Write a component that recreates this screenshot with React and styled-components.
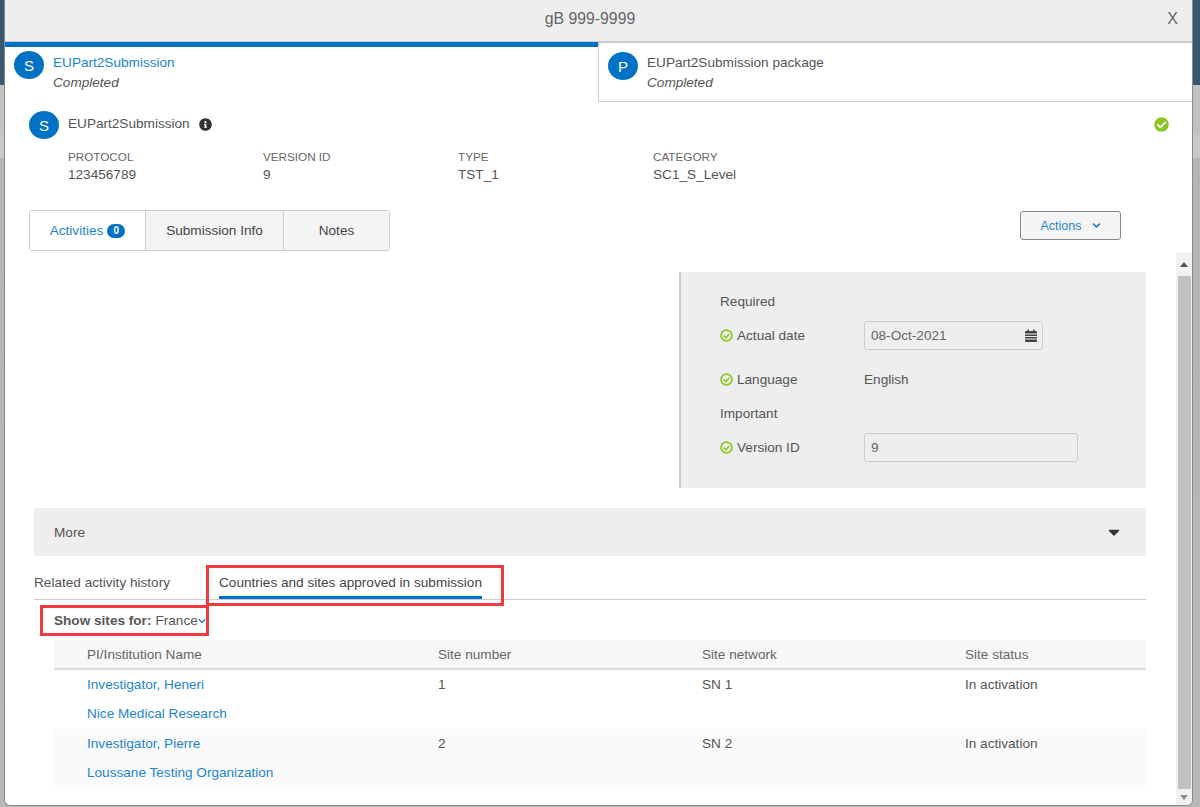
import React from 'react'
import styled, { createGlobalStyle } from 'styled-components'
import { FaInfoCircle, FaCheckCircle, FaChevronDown, FaCaretDown } from 'react-icons/fa'

const blue = '#0072c6'
const link = '#1c85d0'
const text = '#555'

const GlobalStyle = createGlobalStyle`
  html, body { margin: 0; padding: 0; }
  body { font-family: "Liberation Sans", Arial, sans-serif; font-size: 13.6px; color: ${text}; }
`

const Backdrop = styled.div`
  height: 807px;
  box-sizing: border-box;
  padding: 0 7px 1px 4px;
  overflow: hidden;
  background: linear-gradient(to bottom, #3c566f 0, #3c566f 85px, #c2c2c2 85px, #c2c2c2 135px, #c6c9cc 135px, #c6c9cc 158px, #b4b4b4 158px, #b8b8b8 100%);
`

const Modal = styled.div`
  height: 100%;
  box-sizing: border-box;
  display: flex;
  flex-direction: column;
  background: #fff;
  border: 1px solid #8a8a8a;
  border-top: 0;
  border-radius: 0 0 6px 6px;
  overflow: hidden;
`

const Header = styled.header`
  height: 38px;
  flex: none;
  display: flex;
  align-items: center;
  justify-content: center;
  position: relative;
  background: #eee;
  border-bottom: 1px solid #ccc;
  font-size: 15.8px;
  color: #666;
  padding: 0 17px 3px 0;
`

const Close = styled.span`
  position: absolute;
  right: 14px;
  top: 10px;
  font-size: 16px;
`

const Steps = styled.div`
  display: flex;
  flex: none;
  height: 60px;
`

const Step = styled.div`
  box-sizing: border-box;
  display: flex;
  gap: 9px;
  width: ${p => (p.$active ? '593px' : 'auto')};
  flex: ${p => (p.$active ? 'none' : 1)};
  padding: ${p => (p.$active ? '4px 0 0 9px' : '9px 0 0 9px')};
  border-top: ${p => (p.$active ? `5px solid ${blue}` : '1px solid #ccc')};
  border-left: ${p => (p.$active ? 0 : '1px solid #ccc')};
  border-bottom: ${p => (p.$active ? 0 : '1px solid #ccc')};
`

const Avatar = styled.span`
  width: 30px;
  height: 28px;
  flex: none;
  border-radius: 50%;
  background: ${blue};
  color: #fff;
  display: flex;
  align-items: center;
  justify-content: center;
  font-size: 15px;
`

const StepText = styled.div`
  line-height: 20px;
  padding-top: ${p => (p.$active ? '2px' : '1px')};
`

const StepName = styled.div`
  color: ${p => (p.$active ? link : text)};
`

const Status = styled.div`
  font-style: italic;
`

const Summary = styled.section`
  flex: none;
  padding: 9px 23px 0 24px;
`

const TitleRow = styled.div`
  display: flex;
  align-items: center;
  gap: 9px;
  height: 28px;
`

const TitleText = styled.span`
  margin-bottom: 4px;
`

const InfoIcon = styled(FaInfoCircle)`
  color: #333;
  font-size: 13px;
  margin: 0 0 1px 0;
`

const DoneIcon = styled(FaCheckCircle)`
  color: #8cc524;
  font-size: 15px;
  margin: 0 0 1px auto;
`

const Facts = styled.div`
  display: grid;
  grid-template-columns: repeat(4, 195px);
  padding: 9px 0 0 39px;
`

const Fact = styled.div`
  line-height: 17px;
`

const FactLabel = styled.div`
  font-size: 11.7px;
  margin-bottom: 1px;
  color: #666;
  text-transform: uppercase;
`

const Toolbar = styled.div`
  flex: none;
  display: flex;
  justify-content: space-between;
  align-items: flex-start;
  padding: 27px 71px 0 24px;
  height: 42px;
`

const TabGroup = styled.div`
  display: flex;
  height: 41px;
  box-sizing: border-box;
  border: 1px solid #ccc;
  border-radius: 3px;
  overflow: hidden;
`

const TabButton = styled.div`
  width: ${p => p.$width}px;
  box-sizing: border-box;
  display: flex;
  align-items: center;
  justify-content: center;
  gap: 4px;
  background: ${p => (p.$active ? '#fff' : '#f4f4f4')};
  color: ${p => (p.$active ? link : '#444')};
  & + & { border-left: 1px solid #ccc; }
`

const Badge = styled.span`
  background: ${blue};
  color: #fff;
  font-size: 10px;
  font-weight: bold;
  width: 18px;
  height: 14px;
  border-radius: 8px;
  display: inline-flex;
  align-items: center;
  justify-content: center;
`

const ActionsButton = styled.div`
  width: 101px;
  height: 29px;
  margin-top: 1px;
  box-sizing: border-box;
  border: 1px solid #888;
  border-radius: 3px;
  background: #f5f5f5;
  color: ${link};
  font-size: 12.5px;
  display: flex;
  align-items: center;
  justify-content: center;
  gap: 10px;
  svg { color: ${blue}; font-size: 9px; }
`

const ScrollArea = styled.div`
  flex: 1;
  display: flex;
  min-height: 0;
`

const Content = styled.main`
  flex: 1;
  padding: 20px 30px 0 29px;
`

const Scrollbar = styled.div`
  width: 16px;
  flex: none;
  display: flex;
  flex-direction: column;
  background: #f1f1f1;
`

const ScrollButton = styled.div`
  flex: none;
  height: ${p => p.$height}px;
  display: flex;
  align-items: center;
  justify-content: center;
  &::before {
    content: '';
    border-left: 4px solid transparent;
    border-right: 4px solid transparent;
    ${p => (p.$down ? 'border-top: 5px solid #8a8a8a;' : 'border-bottom: 5px solid #505050;')}
  }
`

const ScrollThumb = styled.div`
  flex: 1;
  margin: 0 1px 0 2px;
  background: #c1c1c1;
`

const Panel = styled.section`
  margin-left: auto;
  width: 467px;
  height: 216px;
  box-sizing: border-box;
  background: #eee;
  border-left: 2px solid #ccc;
  padding: 21px 0 0 39px;
`

const GroupLabel = styled.div`
  line-height: 18px;
  margin-bottom: ${p => p.$gap}px;
`

const FieldRow = styled.div`
  display: flex;
  align-items: center;
  height: ${p => p.$height}px;
  margin-bottom: ${p => p.$gap}px;
`

const FieldName = styled.div`
  width: 144px;
  display: flex;
  align-items: center;
  gap: 4px;
`

const Input = styled.div`
  width: ${p => p.$width}px;
  height: 29px;
  box-sizing: border-box;
  border: 1px solid #ccc;
  border-radius: 3px;
  display: flex;
  align-items: center;
  justify-content: space-between;
  padding: 0 5px 0 6px;
  color: #666;
`

const More = styled.div`
  margin-top: 20px;
  height: 48px;
  background: #eee;
  display: flex;
  align-items: center;
  justify-content: space-between;
  padding: 0 23px 0 20px;
  svg { color: #333; font-size: 18px; }
`

const SubTabs = styled.div`
  position: relative;
  display: flex;
  align-items: flex-start;
  gap: 49px;
  height: 44px;
  box-sizing: border-box;
  border-bottom: 1px solid #ccc;
  padding-top: 18px;
`

const SubTab = styled.div`
  line-height: 18px;
  height: 25px;
  box-sizing: border-box;
  color: ${p => (p.$active ? '#444' : text)};
  border-bottom: ${p => (p.$active ? `3px solid ${blue}` : '0')};
`

const Highlight = styled.span`
  position: absolute;
  left: ${p => p.$left}px;
  top: ${p => p.$top}px;
  width: ${p => p.$width}px;
  height: ${p => p.$height}px;
  box-sizing: border-box;
  border: 3px solid #f03a3e;
`

const Filter = styled.div`
  position: relative;
  height: 40px;
  display: flex;
  align-items: center;
  padding-left: 20px;
  svg { color: ${blue}; font-size: 8px; margin-top: 2px; }
`

const FilterLabel = styled.b`
  color: #555;
  margin-right: 4px;
`

const Table = styled.div`
  margin-left: 20px;
`

const Row = styled.div`
  display: grid;
  grid-template-columns: 351px 264px 263px 1fr;
  padding-left: 33px;
  background: ${p => p.$bg || '#fff'};
  ${p => p.$head && 'height: 28px; align-items: center; border-bottom: 2px solid #ddd; color: #666;'}
`

const Cell = styled.div`
  line-height: 29.25px;
`

const Link = styled.a`
  display: block;
  color: ${link};
  line-height: 29.25px;
`

const CheckRing = () => (
  <svg width="13" height="13" viewBox="0 0 13 13" fill="none" stroke="#8cc524">
    <circle cx="6.5" cy="6.5" r="5.4" strokeWidth="1.7" />
    <path d="M3.8 6.6l2 2 3.4-3.6" strokeWidth="1.6" />
  </svg>
)

const CalendarIcon = () => (
  <svg width="12" height="13" viewBox="0 0 12 13" fill="#444">
    <path d="M0 3a1 1 0 0 1 1-1h1.5V.5h1.5V2h4V.5h1.5V2H11a1 1 0 0 1 1 1v1.5H0z" />
    <path d="M0 5.5h12v1.5H0zM0 8h12v1.5H0zM0 10.5h12V12a1 1 0 0 1-1 1H1a1 1 0 0 1-1-1z" />
  </svg>
)

const sites = [
  { pi: 'Investigator, Heneri', org: 'Nice Medical Research', number: '1', network: 'SN 1', bg: '#fff' },
  { pi: 'Investigator, Pierre', org: 'Loussane Testing Organization', number: '2', network: 'SN 2', bg: '#fafafa' },
]

export default function App() {
  return (
    <Backdrop>
      <GlobalStyle />
      <Modal>
        <Header>
          gB 999-9999
          <Close>X</Close>
        </Header>
        <Steps>
          <Step $active>
            <Avatar>S</Avatar>
            <StepText $active>
              <StepName $active>EUPart2Submission</StepName>
              <Status>Completed</Status>
            </StepText>
          </Step>
          <Step>
            <Avatar>P</Avatar>
            <StepText>
              <StepName>EUPart2Submission package</StepName>
              <Status>Completed</Status>
            </StepText>
          </Step>
        </Steps>
        <Summary>
          <TitleRow>
            <Avatar>S</Avatar>
            <TitleText>EUPart2Submission</TitleText>
            <InfoIcon />
            <DoneIcon />
          </TitleRow>
          <Facts>
            <Fact><FactLabel>Protocol</FactLabel>123456789</Fact>
            <Fact><FactLabel>Version ID</FactLabel>9</Fact>
            <Fact><FactLabel>Type</FactLabel>TST_1</Fact>
            <Fact><FactLabel>Category</FactLabel>SC1_S_Level</Fact>
          </Facts>
        </Summary>
        <Toolbar>
          <TabGroup>
            <TabButton $active $width={115}>Activities <Badge>0</Badge></TabButton>
            <TabButton $width={138}>Submission Info</TabButton>
            <TabButton $width={106}>Notes</TabButton>
          </TabGroup>
          <ActionsButton>Actions <FaChevronDown /></ActionsButton>
        </Toolbar>
        <ScrollArea>
          <Content>
            <Panel>
              <GroupLabel $gap={10}>Required</GroupLabel>
              <FieldRow $height={29} $gap={15}>
                <FieldName><CheckRing />Actual date</FieldName>
                <Input $width={179}>08-Oct-2021<CalendarIcon /></Input>
              </FieldRow>
              <FieldRow $height={29} $gap={11}>
                <FieldName><CheckRing />Language</FieldName>
                English
              </FieldRow>
              <GroupLabel $gap={10}>Important</GroupLabel>
              <FieldRow $height={29} $gap={0}>
                <FieldName><CheckRing />Version ID</FieldName>
                <Input $width={214}>9</Input>
              </FieldRow>
            </Panel>
            <More>More<FaCaretDown /></More>
            <SubTabs>
              <SubTab>Related activity history</SubTab>
              <SubTab $active>Countries and sites approved in submission</SubTab>
              <Highlight $left={172} $top={9} $width={298} $height={41} />
            </SubTabs>
            <Filter>
              <FilterLabel>Show sites for:</FilterLabel>France<FaChevronDown />
              <Highlight $left={6} $top={5} $width={169} $height={31} />
            </Filter>
            <Table>
              <Row $head $bg="#f7f7f7">
                <span>PI/Institution Name</span>
                <span>Site number</span>
                <span>Site network</span>
                <span>Site status</span>
              </Row>
              {sites.map(site => (
                <Row key={site.pi} $bg={site.bg}>
                  <div>
                    <Link>{site.pi}</Link>
                    <Link>{site.org}</Link>
                  </div>
                  <Cell>{site.number}</Cell>
                  <Cell>{site.network}</Cell>
                  <Cell>In activation</Cell>
                </Row>
              ))}
            </Table>
          </Content>
          <Scrollbar>
            <ScrollButton $height={24} />
            <ScrollThumb />
            <ScrollButton $down $height={16} />
          </Scrollbar>
        </ScrollArea>
      </Modal>
    </Backdrop>
  )
}
